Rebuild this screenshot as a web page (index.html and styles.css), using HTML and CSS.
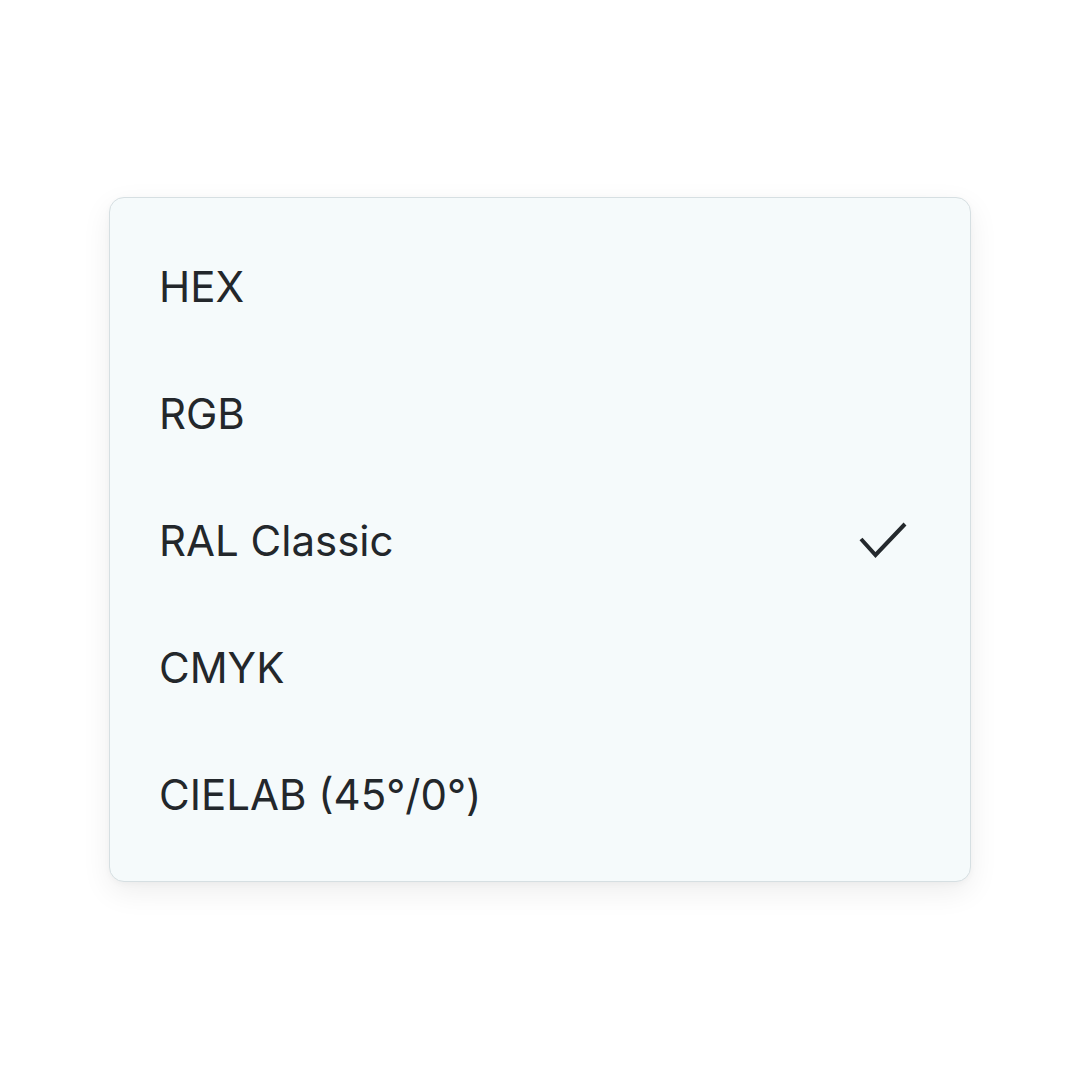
FILE: index.html
```html
<!DOCTYPE html>
<html lang="en">
<head>
<meta charset="utf-8">
<title>Color format menu</title>
<link rel="stylesheet" href="styles.css">
</head>
<body>
<main class="stage">
  <ul class="menu" role="listbox">
    <li class="item" role="option"><span class="label">HEX</span></li>
    <li class="item" role="option"><span class="label">RGB</span></li>
    <li class="item selected" role="option" aria-selected="true">
      <span class="label">RAL Classic</span>
      <svg class="check" viewBox="0 0 48 38" width="48" height="38" aria-hidden="true">
        <path d="M2 18 L16.5 34 L46 3" fill="none" stroke="#24292d" stroke-width="4" stroke-linecap="butt" stroke-linejoin="miter"/>
      </svg>
    </li>
    <li class="item" role="option"><span class="label">CMYK</span></li>
    <li class="item" role="option"><span class="label">CIELAB (45°/0°)</span></li>
  </ul>
</main>
</body>
</html>
```
FILE: styles.css
```css
html, body {
  margin: 0;
  padding: 0;
  background: #ffffff;
}
.stage {
  width: 1080px;
  height: 1080px;
  display: flex;
  align-items: center;
  justify-content: center;
  box-sizing: border-box;
  padding-bottom: 2px;
}
.menu {
  list-style: none;
  margin: 0;
  width: 862px;
  box-sizing: border-box;
  padding: 25px 60px 23px 49px;
  background: #f5fafb;
  border: 1.5px solid #d6dfe2;
  border-radius: 15px;
  box-shadow: 0 10px 30px rgba(0, 0, 0, 0.07), 0 2px 6px rgba(0, 0, 0, 0.03);
}
.item {
  height: 127px;
  display: flex;
  align-items: center;
  justify-content: space-between;
}
.label {
  font-family: Inter, "Open Sans", sans-serif;
  font-size: 42px;
  font-weight: 400;
  color: #23272b;
  letter-spacing: 0;
}
.check {
  display: block;
  margin-right: 3px;
}
```
